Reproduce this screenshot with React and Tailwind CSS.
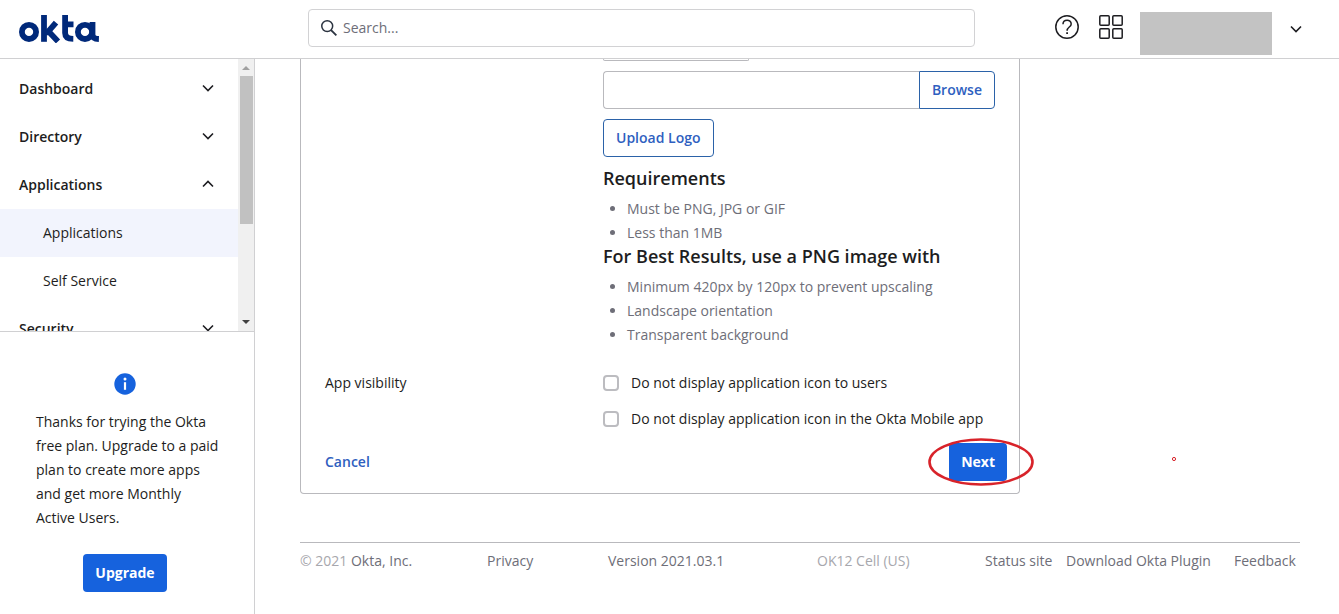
import React from "react";

const GROUPS = [
  { name: "Dashboard" },
  { name: "Directory" },
  { name: "Applications", open: true, items: ["Applications", "Self Service"] },
  { name: "Security" },
];

function Chevron({ up }) {
  return (
    <svg width="12" height="10" viewBox="0 0 12 10" fill="none" stroke="#1d1d21" strokeWidth="1.6" aria-hidden="true">
      <path d={up ? "M1 6.5 6 1.5l5 5" : "M1 1.5l5 5 5-5"} />
    </svg>
  );
}

function Logo() {
  return (
    <svg width="81" height="28" viewBox="0 0 81 28" fill="none" stroke="#00297a" strokeWidth="5.8" role="img" aria-label="okta">
      <circle cx="10" cy="16.9" r="7.1" />
      <path d="M25 0v26.8" />
      <path d="M27 17.4h1.5L37 7.6M29.4 16.3 39 26.4" strokeWidth="5.8" />
      <path d="M46.1 0v18q0 5.8 8.2 5.9M45.8 9.4h8.7" />
      <circle cx="66" cy="16.9" r="7.1" />
      <path d="M73.5 7v12.4q0 4.4 6.4 4.6" />
    </svg>
  );
}

function Header() {
  return (
    <header className="flex h-[59px] shrink-0 items-center border-b border-[#d0d0d2] pr-[37px] pb-0.5 pl-[19px]">
      <a href="#home" className="w-[289px] shrink-0 pt-0.5"><Logo /></a>
      <label className="flex h-[38px] w-[667px] items-center gap-1.5 rounded border border-[#d2d2d4] pl-3">
        <svg width="16" height="18" viewBox="0 0 17 18" fill="none" stroke="#2b3340" strokeWidth="1.6" aria-hidden="true">
          <circle cx="6.6" cy="7" r="5.8" />
          <path d="m10.7 11.3 5.6 5.6" strokeWidth="2" />
        </svg>
        <input type="search" aria-label="Search" placeholder="Search..." className="min-w-0 flex-1 bg-transparent outline-none placeholder:text-[#6e6e78]" />
      </label>
      <div className="ml-auto flex items-center">
        <button type="button" aria-label="Help" className="mr-5">
          <svg width="24" height="26" viewBox="0 0 24 26" fill="none" stroke="#1d1d21" strokeWidth="1.5" className="-mt-0.5">
            <circle cx="12" cy="13" r="11.2" />
            <path d="M8 10.2c0-5.2 8.2-5.2 8.2-.3 0 3.3-4.1 3-4.1 6.8" />
            <path d="M12.1 18.2v1.8" strokeWidth="1.8" />
          </svg>
        </button>
        <button type="button" aria-label="Apps" className="mr-[17px]">
          <svg width="24" height="24" viewBox="0 0 24 24" fill="none" stroke="#1d1d21" strokeWidth="1.5" className="-mt-0.5">
            <rect x=".8" y=".8" width="9.4" height="9.4" rx="1" />
            <rect x="13.8" y=".8" width="9.4" height="9.4" rx="1" />
            <rect x=".8" y="13.8" width="9.4" height="9.4" rx="1" />
            <rect x="13.8" y="13.8" width="9.4" height="9.4" rx="1" />
          </svg>
        </button>
        <div className="mt-2.5 mr-[18px] h-[43px] w-[132px] bg-[#c3c3c3]" />
        <button type="button" aria-label="Account menu" className="pt-1"><Chevron /></button>
      </div>
    </header>
  );
}

function Sidebar() {
  return (
    <aside className="flex w-[255px] shrink-0 flex-col border-r border-[#d0d0d2]">
      <div className="flex min-h-0 flex-1 overflow-hidden border-b border-[#d0d0d2]">
        <nav className="min-w-0 flex-1 pt-1.5">
          {GROUPS.map((g) => (
            <div key={g.name}>
              <button type="button" aria-expanded={!!g.open} className="flex h-12 w-full items-center justify-between pr-6 pl-[19px] font-semibold">
                {g.name}
                <Chevron up={g.open} />
              </button>
              {g.items?.map((item, i) => (
                <a key={item} href="#apps" className={i === 0 ? "flex h-12 items-center bg-[#f2f4fd] pl-[43px]" : "flex h-12 items-center pl-[43px]"}>
                  {item}
                </a>
              ))}
            </div>
          ))}
        </nav>
        <div className="flex w-4 shrink-0 flex-col items-center bg-[#f0f0f0]" aria-hidden="true">
          <svg width="8" height="17" viewBox="0 0 8 17"><path d="M0 11h8L4 7z" fill="#a0a0a0" /></svg>
          <div className="h-[148px] w-[13px] bg-[#c1c1c1]" />
          <svg width="8" height="17" viewBox="0 0 8 17" className="mt-auto"><path d="M0 6h8l-4 4z" fill="#404040" /></svg>
        </div>
      </div>
      <section className="flex flex-col items-center pt-[41px] pr-8 pb-[22px] pl-9">
        <svg width="22" height="22" viewBox="0 0 22 22" className="mr-2" aria-hidden="true">
          <circle cx="11" cy="11" r="10.7" fill="#1662dd" />
          <path d="M11 9.2v7.6" stroke="#fff" strokeWidth="2.2" />
          <circle cx="11" cy="5.9" r="1.5" fill="#fff" />
        </svg>
        <p className="mt-[15px] mb-6 leading-6">Thanks for trying the Okta free plan. Upgrade to a paid plan to create more apps and get more Monthly Active Users.</p>
        <button type="button" className="mr-2 h-[38px] rounded bg-[#1662dd] px-3 font-bold text-white">Upgrade</button>
      </section>
    </aside>
  );
}

function Bullets({ items }) {
  return (
    <ul className="list-disc pl-6 leading-6 text-[#6e6e78]">
      {items.map((t) => <li key={t}>{t}</li>)}
    </ul>
  );
}

function Check({ children }) {
  return (
    <label className="flex h-6 items-center gap-3">
      <input type="checkbox" className="size-4 shrink-0 appearance-none rounded border-2 border-[#bcbcc0]" />
      {children}
    </label>
  );
}

function Footer() {
  return (
    <footer className="mt-12 grid grid-cols-[187fr_121fr_209fr_168fr_81fr_168fr_66fr] border-t border-[#b9b9bd] pt-1.5 leading-6 whitespace-nowrap text-[#6e6e78]">
      <span><span className="text-[#a7a7ad]">© 2021</span> <a href="#okta">Okta, Inc.</a></span>
      <a href="#privacy">Privacy</a>
      <a href="#version">Version 2021.03.1</a>
      <span className="text-[#a7a7ad]">OK12 Cell (US)</span>
      <a href="#status">Status site</a>
      <a href="#plugin">Download Okta Plugin</a>
      <a href="#feedback">Feedback</a>
    </footer>
  );
}

export default function App() {
  return (
    <div className="flex h-screen flex-col overflow-hidden bg-white font-['Open_Sans',sans-serif] text-sm text-[#1d1d21]">
      <Header />
      <div className="flex min-h-0 flex-1">
        <Sidebar />
        <main className="relative min-w-0 flex-1 pr-[39px] pl-[45px]">
          <form className="max-w-[720px] rounded-b border border-t-0 border-[#b9b9bd] px-6 pb-3">
            <div className="pl-[278px]">
              <div className="h-0.5 w-[146px] rounded-b border border-t-0 border-[#b9b9bd]" />
              <div className="mt-2.5 flex h-[38px]">
                <input type="text" aria-label="Logo file" className="min-w-0 flex-1 rounded-l border border-r-0 border-[#b9b9bd] px-3" />
                <button type="button" className="rounded-r border border-[#2b62a8] px-3 font-semibold text-[#2f5fc0]">Browse</button>
              </div>
              <button type="button" className="mt-2.5 h-[38px] rounded border border-[#2b62a8] px-3 font-semibold text-[#2f5fc0]">Upload Logo</button>
              <h2 className="mt-2 mb-1.5 text-lg leading-[26px] font-semibold">Requirements</h2>
              <Bullets items={["Must be PNG, JPG or GIF", "Less than 1MB"]} />
              <h2 className="-mt-0.5 mb-1.5 text-lg leading-[26px] font-semibold">For Best Results, use a PNG image with</h2>
              <Bullets items={["Minimum 420px by 120px to prevent upscaling", "Landscape orientation", "Transparent background"]} />
            </div>
            <fieldset className="mt-6 flex">
              <legend className="float-left w-[278px] shrink-0 leading-6">App visibility</legend>
              <div className="flex flex-col gap-3">
                <Check>Do not display application icon to users</Check>
                <Check>Do not display application icon in the Okta Mobile app</Check>
              </div>
            </fieldset>
            <div className="-mr-3 mt-3 flex items-center justify-between">
              <button type="button" className="font-semibold text-[#2f5fc0]">Cancel</button>
              <div className="relative">
                <button type="submit" className="h-[38px] rounded bg-[#1662dd] px-3 font-bold text-white">Next</button>
                <svg width="110" height="50" viewBox="0 0 110 50" className="pointer-events-none absolute -top-1.5 -left-[23px] max-w-none" fill="none" aria-hidden="true">
                  <ellipse cx="55" cy="25" rx="51.5" ry="22.5" stroke="#d8232a" strokeWidth="2.6" />
                </svg>
              </div>
            </div>
          </form>
          <Footer />
          <svg width="6" height="6" viewBox="0 0 6 6" className="absolute top-[397px] left-[916px]" fill="none" aria-hidden="true">
            <circle cx="3" cy="3" r="1.6" stroke="#d8232a" />
          </svg>
        </main>
      </div>
    </div>
  );
}
